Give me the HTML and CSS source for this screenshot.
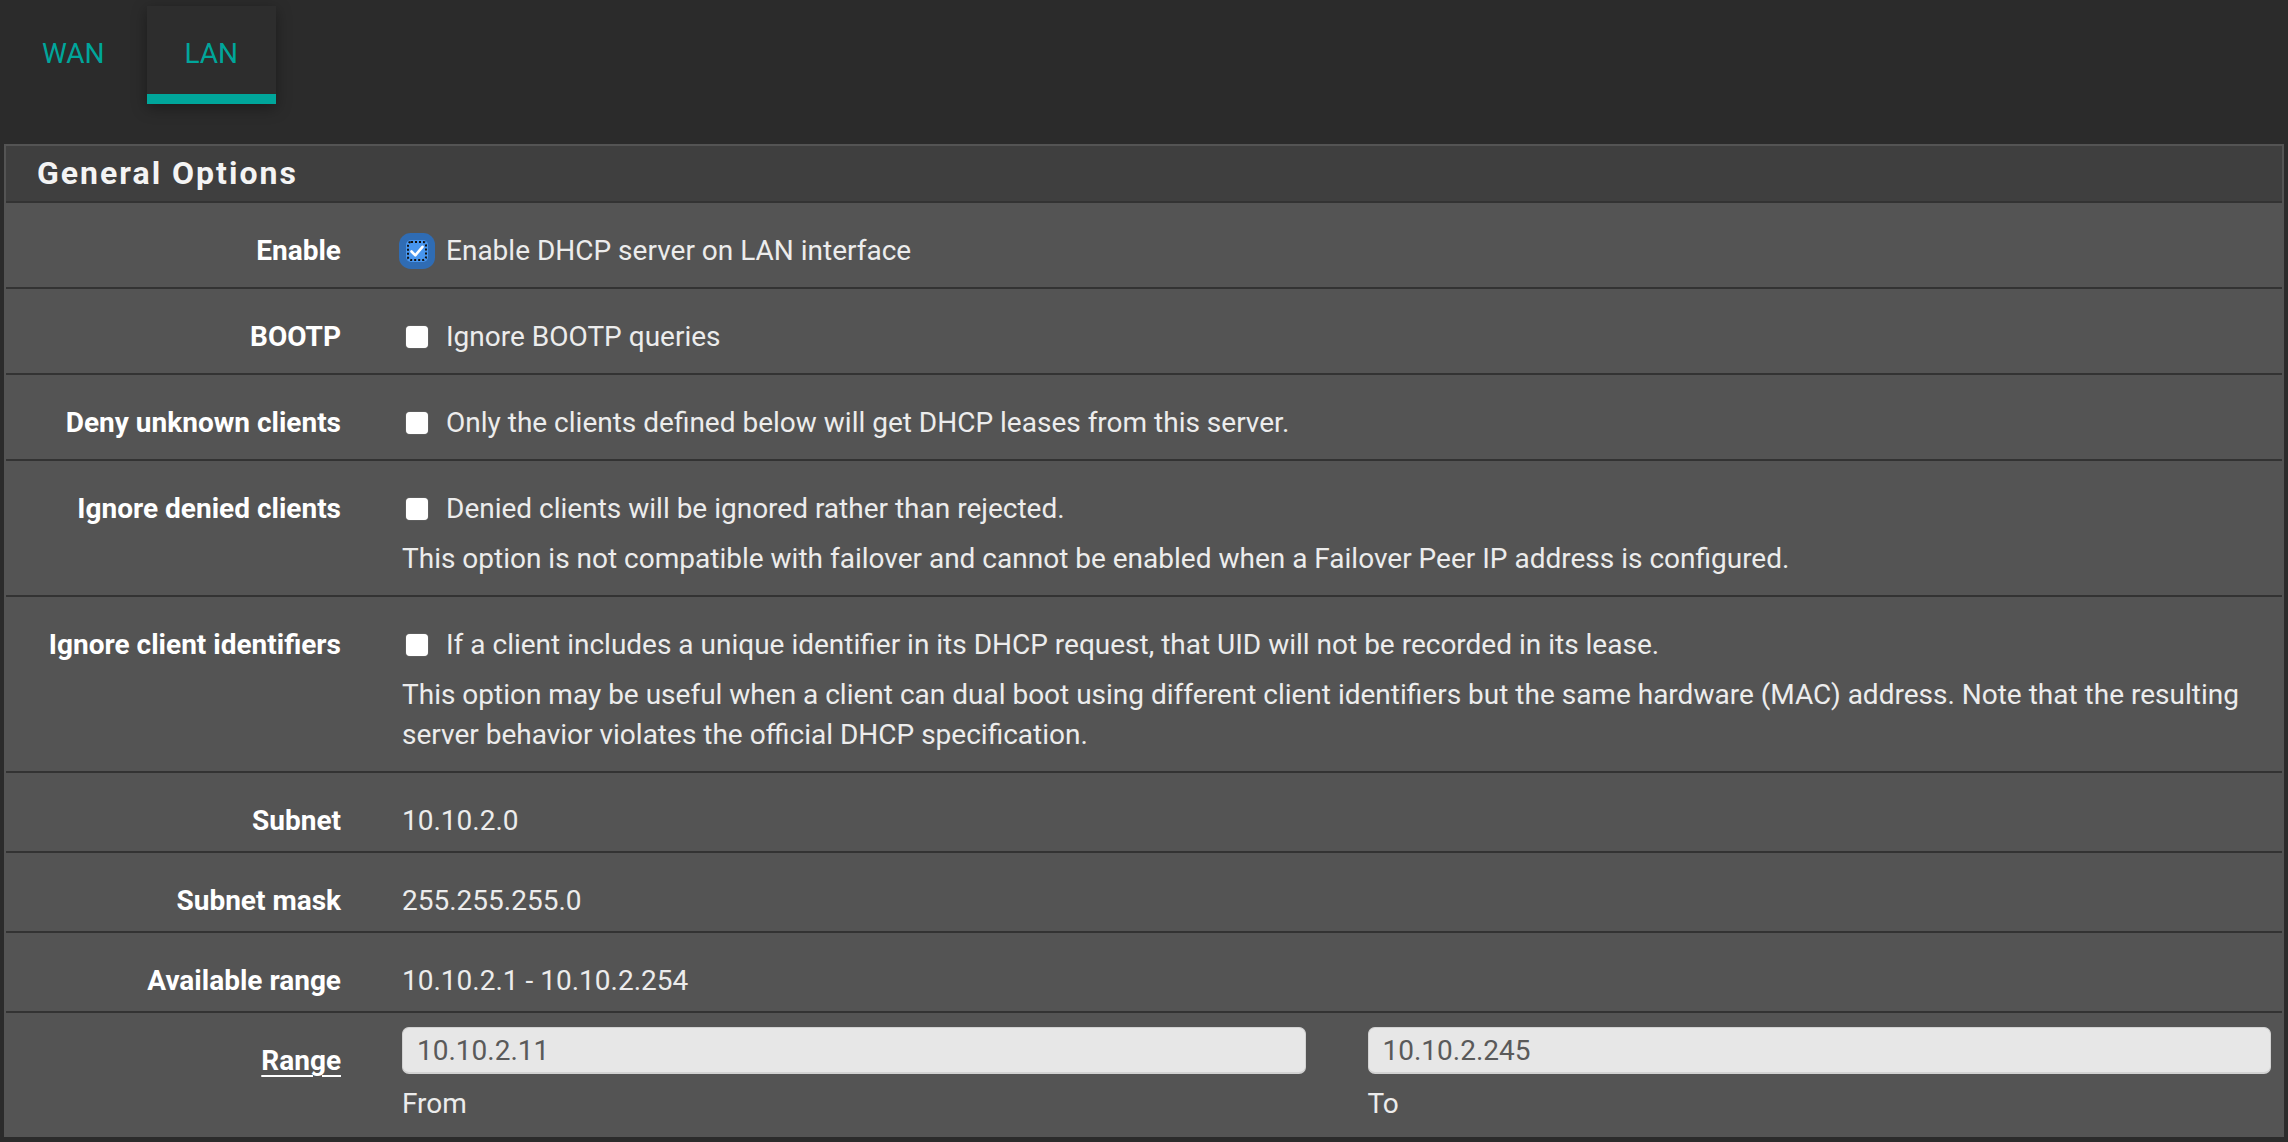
FILE: index.html
```html
<!DOCTYPE html>
<html lang="en">
<head>
<meta charset="utf-8">
<title>DHCP Server</title>
<link rel="stylesheet" href="styles.css">
</head>
<body>
<nav class="tabs">
  <a class="tab">WAN</a>
  <a class="tab tab-active">LAN</a>
</nav>

<section class="panel">
  <h2 class="panel-heading">General Options</h2>
  <div class="panel-body">
    <div class="form-row">
      <div class="form-label">Enable</div>
      <div class="form-field">
        <div class="check-line">
          <span class="cb cb-checked"><svg viewBox="0 0 22 22" width="22" height="22"><path d="M5.5 11.5 L9.3 15.3 L16.5 6.8" fill="none" stroke="#fff" stroke-width="2.6" stroke-linecap="round" stroke-linejoin="round"/></svg></span>
          <span>Enable DHCP server on LAN interface</span>
        </div>
      </div>
    </div>

    <div class="form-row">
      <div class="form-label">BOOTP</div>
      <div class="form-field">
        <div class="check-line">
          <span class="cb"></span>
          <span>Ignore BOOTP queries</span>
        </div>
      </div>
    </div>

    <div class="form-row">
      <div class="form-label">Deny unknown clients</div>
      <div class="form-field">
        <div class="check-line">
          <span class="cb"></span>
          <span>Only the clients defined below will get DHCP leases from this server.</span>
        </div>
      </div>
    </div>

    <div class="form-row">
      <div class="form-label">Ignore denied clients</div>
      <div class="form-field">
        <div class="check-line">
          <span class="cb"></span>
          <span>Denied clients will be ignored rather than rejected.</span>
        </div>
        <p class="help">This option is not compatible with failover and cannot be enabled when a Failover Peer IP address is configured.</p>
      </div>
    </div>

    <div class="form-row">
      <div class="form-label">Ignore client identifiers</div>
      <div class="form-field">
        <div class="check-line">
          <span class="cb"></span>
          <span>If a client includes a unique identifier in its DHCP request, that UID will not be recorded in its lease.</span>
        </div>
        <p class="help">This option may be useful when a client can dual boot using different client identifiers but the same hardware (MAC) address. Note that the resulting server behavior violates the official DHCP specification.</p>
      </div>
    </div>

    <div class="form-row">
      <div class="form-label">Subnet</div>
      <div class="form-field form-static">10.10.2.0</div>
    </div>

    <div class="form-row">
      <div class="form-label">Subnet mask</div>
      <div class="form-field form-static">255.255.255.0</div>
    </div>

    <div class="form-row">
      <div class="form-label">Available range</div>
      <div class="form-field form-static">10.10.2.1 - 10.10.2.254</div>
    </div>

    <div class="form-row form-row-last">
      <div class="form-label"><span class="label-link">Range</span></div>
      <div class="form-field form-inputs">
        <div class="input-col">
          <input class="text-input" type="text" value="10.10.2.11">
          <div class="input-caption">From</div>
        </div>
        <div class="input-col">
          <input class="text-input" type="text" value="10.10.2.245">
          <div class="input-caption">To</div>
        </div>
      </div>
    </div>
  </div>
</section>
</body>
</html>
```

FILE: styles.css
```css
* {
  box-sizing: border-box;
}

html, body {
  margin: 0;
  padding: 0;
  background: #2b2b2b;
  font-family: Roboto, "Liberation Sans", sans-serif;
  font-size: 28px;
  color: #ececec;
}

/* ---------- tabs ---------- */
.tabs {
  display: flex;
  padding: 6px 0 0 4px;
  height: 144px;
}

.tab {
  display: block;
  height: 98px;
  padding: 28px 38px 0;
  line-height: 40px;
  color: #00a69b;
  margin-right: 4px;
  border-bottom: 10px solid transparent;
}

.tab-active {
  border-bottom-color: #00a69b;
  box-shadow: 0 4px 14px rgba(0, 0, 0, 0.35);
  background: #2d2d2d;
}

/* ---------- panel ---------- */
.panel {
  margin: 0 4px;
  border: 2px solid #545454;
  background: #545454;
}

.panel-heading {
  margin: 0;
  height: 57px;
  padding: 0 0 0 31px;
  background: #3f3f3f;
  border-bottom: 2px solid #333333;
  font-size: 32px;
  font-weight: 700;
  letter-spacing: 2px;
  line-height: 55px;
  color: #f4f4f4;
}

.form-row {
  display: grid;
  grid-template-columns: 366px 1fr;
  padding: 14px 0 10px;
  border-bottom: 2px solid #333333;
}

.form-row-last {
  border-bottom: 0;
  padding-bottom: 11px;
}

.form-label {
  padding: 14px 31px 0 0;
  text-align: right;
  font-weight: 700;
  line-height: 40px;
  color: #ffffff;
}

.label-link {
  text-decoration: underline;
  text-decoration-thickness: 2px;
  text-underline-offset: 5px;
}

.form-field {
  padding: 14px 11px 6px 30px;
  line-height: 40px;
}

.form-static {
  padding-bottom: 0;
}

.check-line {
  display: flex;
  align-items: center;
  gap: 18px;
  min-height: 40px;
}

.cb {
  flex: none;
  width: 22px;
  height: 22px;
  margin-left: 4px;
  border-radius: 4px;
  background: #ffffff;
  box-shadow: 0 0 1px rgba(255, 255, 255, 0.6);
}

.cb svg {
  display: block;
}

.cb-checked {
  background: #4896ef;
  outline: 2px dotted #111111;
  outline-offset: -3px;
  box-shadow: 0 0 0 7px #2f6cb4;
  border-radius: 5px;
}

.help {
  margin: 10px 0 0;
  line-height: 40px;
}

/* ---------- range inputs ---------- */
.form-inputs {
  display: grid;
  grid-template-columns: 1fr 1fr;
  column-gap: 62px;
  padding-top: 0;
  padding-bottom: 0;
}

.text-input {
  display: block;
  width: 100%;
  height: 47px;
  margin: 0;
  padding: 0 14px;
  border: 1px solid #d2d2d2;
  border-bottom-width: 2px;
  border-radius: 7px;
  background: #e7e7e7;
  font-family: Roboto, "Liberation Sans", sans-serif;
  font-size: 28px;
  color: #5a5a5a;
  outline: none;
}

.input-caption {
  margin-top: 10px;
  line-height: 40px;
  color: #ececec;
}
```
